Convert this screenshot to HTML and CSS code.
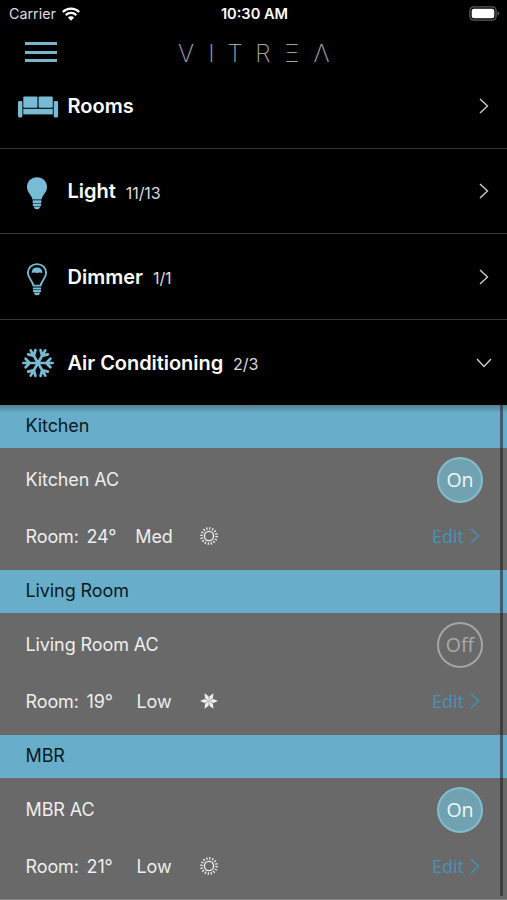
FILE: index.html
```
<!DOCTYPE html>
<html lang="en">
<head>
    <meta charset="UTF-8">
    <meta name="viewport" content="width=device-width, initial-scale=1.0">
    <title>Vitrea</title>
    <link rel="stylesheet" href="styles.css">
</head>
<body>

<!-- shared icons -->
<svg class="icon-defs" width="0" height="0">
    <symbol id="chevron" viewBox="0 0 12 18">
        <path d="M2 2 L9.5 9 L2 16" fill="none" stroke="currentColor" stroke-width="1.4"/>
    </symbol>
    <symbol id="sun" viewBox="0 0 20 20">
        <g fill="none" stroke="currentColor">
            <circle cx="10" cy="10" r="4.6" stroke-width="1.4"/>
            <circle cx="10" cy="10" r="7.6" stroke-width="2.6" stroke-dasharray="1.25 1.735"/>
        </g>
    </symbol>
    <symbol id="flake" viewBox="0 0 20 20">
        <g fill="currentColor">
            <path d="M10 10 L8 5.6 L10 1 L12 5.6 Z" transform="rotate(30 10 10)"/>
            <path d="M10 10 L8 5.6 L10 1 L12 5.6 Z" transform="rotate(90 10 10)"/>
            <path d="M10 10 L8 5.6 L10 1 L12 5.6 Z" transform="rotate(150 10 10)"/>
            <path d="M10 10 L8 5.6 L10 1 L12 5.6 Z" transform="rotate(210 10 10)"/>
            <path d="M10 10 L8 5.6 L10 1 L12 5.6 Z" transform="rotate(270 10 10)"/>
            <path d="M10 10 L8 5.6 L10 1 L12 5.6 Z" transform="rotate(330 10 10)"/>
        </g>
    </symbol>
    <symbol id="arm" viewBox="0 0 32 32" overflow="visible">
        <path d="M16 16 V1.4 M11.8 3.6 L16 7.8 L20.2 3.6" fill="none" stroke="currentColor" stroke-width="2.7" stroke-linecap="round"/>
    </symbol>
</svg>

<div class="status-bar">
    <div class="carrier">
        <span>Carrier</span>
        <svg width="18" height="14" viewBox="0 0 18 14">
            <g fill="none" stroke="#fff" stroke-width="2.3">
                <path d="M0.8 5 A11.7 11.7 0 0 1 17.2 5"/>
                <path d="M3.7 8.1 A7.6 7.6 0 0 1 14.3 8.1"/>
            </g>
            <path d="M9 13.7 L5.9 10.5 A4.4 4.4 0 0 1 12.1 10.5 Z" fill="#fff"/>
        </svg>
    </div>
    <div class="time">10:30 AM</div>
    <svg class="battery" width="31" height="15" viewBox="0 0 31 15">
        <rect x="0.9" y="0.9" width="26.2" height="13.2" rx="4" fill="none" stroke="#5c5c5c" stroke-width="1.3"/>
        <rect x="2.7" y="2.7" width="22.6" height="9.6" rx="2.2" fill="#fff"/>
        <path d="M28.6 5.2 Q30.4 6 30.4 7.5 Q30.4 9 28.6 9.8 Z" fill="#5c5c5c"/>
    </svg>
</div>

<div class="header">
    <div class="menu-btn"><span></span><span></span><span></span></div>
    <div class="logo"><span>V</span><span>I</span><span>T</span><span>R</span><span class="xi">Ξ</span><span>Λ</span></div>
</div>

<div class="menu">
    <div class="menu-row">
        <div class="menu-icon couch">
            <svg width="42" height="24" viewBox="0 0 42 24">
                <g fill="#78bbd5">
                    <rect x="6.3" y="1.5" width="14.2" height="11.3" rx="1"/>
                    <rect x="21.6" y="1.5" width="14.2" height="11.3" rx="1"/>
                    <rect x="6.3" y="13.8" width="29.5" height="5.6"/>
                    <rect x="1" y="6" width="4.4" height="16.5" rx="1.4"/>
                    <rect x="36.7" y="6" width="4.4" height="16.5" rx="1.4"/>
                </g>
            </svg>
        </div>
        <div class="menu-title">Rooms</div>
        <svg class="arrow" width="12" height="18"><use href="#chevron"/></svg>
    </div>

    <div class="menu-row">
        <div class="menu-icon bulb">
            <svg width="22" height="34" viewBox="0 0 22 34">
                <g fill="#78bbd5">
                    <path d="M11 1.3 C5 1.3 1 5.7 1 11 C1 16.6 5.6 18.6 6.4 23.6 H15.6 C16.4 18.6 21 16.6 21 11 C21 5.7 17 1.3 11 1.3 Z"/>
                    <rect x="6.6" y="24.3" width="8.8" height="2.6" rx="0.6"/>
                    <rect x="6.8" y="27.4" width="8.4" height="2.5" rx="0.6"/>
                    <path d="M7.4 30.4 H14.6 Q13.6 33.2 11 33.2 Q8.4 33.2 7.4 30.4 Z"/>
                </g>
            </svg>
        </div>
        <div class="menu-title">Light</div>
        <div class="menu-count">11/13</div>
        <svg class="arrow" width="12" height="18"><use href="#chevron"/></svg>
    </div>

    <div class="menu-row">
        <div class="menu-icon bulb">
            <svg width="22" height="34" viewBox="0 0 22 34">
                <path d="M11 2.1 C5.6 2.1 1.9 6 1.9 11 C1.9 16 6.6 18.6 7.4 23.6 H14.6 C15.4 18.6 20.1 16 20.1 11 C20.1 6 16.4 2.1 11 2.1 Z" fill="none" stroke="#78bbd5" stroke-width="1.9"/>
                <g fill="#78bbd5">
                    <path d="M5.6 11 Q5.6 5.4 11 5.4 Q16.4 5.4 16.4 11 Q13.7 10.2 11 11 Q8.3 10.2 5.6 11 Z"/>
                    <rect x="6.8" y="25.5" width="8.4" height="1.9" rx="0.6"/>
                    <rect x="6.9" y="28" width="8.2" height="1.9" rx="0.6"/>
                    <path d="M7.6 30.4 H14.4 Q13.6 33.2 11 33.2 Q8.4 33.2 7.6 30.4 Z"/>
                </g>
            </svg>
        </div>
        <div class="menu-title">Dimmer</div>
        <div class="menu-count">1/1</div>
        <svg class="arrow" width="12" height="18"><use href="#chevron"/></svg>
    </div>

    <div class="menu-row">
        <div class="menu-icon snow">
            <svg width="32" height="32" viewBox="0 0 32 32">
                <use href="#arm" width="32" height="32" transform="rotate(30 16 16)"/>
                <use href="#arm" width="32" height="32" transform="rotate(90 16 16)"/>
                <use href="#arm" width="32" height="32" transform="rotate(150 16 16)"/>
                <use href="#arm" width="32" height="32" transform="rotate(210 16 16)"/>
                <use href="#arm" width="32" height="32" transform="rotate(270 16 16)"/>
                <use href="#arm" width="32" height="32" transform="rotate(330 16 16)"/>
            </svg>
        </div>
        <div class="menu-title title-ac">Air Conditioning</div>
        <div class="menu-count">2/3</div>
        <svg class="arrow arrow-down" width="12" height="18"><use href="#chevron"/></svg>
    </div>
</div>

<div class="ac-list">
    <div class="room-name">Kitchen</div>
    <div class="room-body">
        <div class="ac-top">
            <div class="ac-name">Kitchen AC</div>
            <div class="power on">On</div>
        </div>
        <div class="ac-bottom">
            <div class="room-label">Room:</div>
            <div class="room-temp">24°</div>
            <div class="fan">Med</div>
            <svg class="mode" width="20" height="20"><use href="#sun"/></svg>
            <div class="edit">Edit <svg width="12" height="18"><use href="#chevron"/></svg></div>
        </div>
    </div>

    <div class="room-name">Living Room</div>
    <div class="room-body">
        <div class="ac-top">
            <div class="ac-name">Living Room AC</div>
            <div class="power">Off</div>
        </div>
        <div class="ac-bottom">
            <div class="room-label">Room:</div>
            <div class="room-temp">19°</div>
            <div class="fan">Low</div>
            <svg class="mode" width="20" height="20"><use href="#flake"/></svg>
            <div class="edit">Edit <svg width="12" height="18"><use href="#chevron"/></svg></div>
        </div>
    </div>

    <div class="room-name">MBR</div>
    <div class="room-body">
        <div class="ac-top">
            <div class="ac-name">MBR AC</div>
            <div class="power on">On</div>
        </div>
        <div class="ac-bottom">
            <div class="room-label">Room:</div>
            <div class="room-temp">21°</div>
            <div class="fan">Low</div>
            <svg class="mode" width="20" height="20"><use href="#sun"/></svg>
            <div class="edit">Edit <svg width="12" height="18"><use href="#chevron"/></svg></div>
        </div>
    </div>
    <div class="scrollbar"></div>
</div>

</body>
</html>
```
FILE: styles.css
```
* {
    box-sizing: border-box;
}

body {
    margin: 0;
    height: 900px;
    overflow: hidden;
    background-color: #000;
    color: #fff;
    font-family: Inter, "Liberation Sans", sans-serif;
}

svg {
    display: block;
    flex: none;
}

.icon-defs {
    position: absolute;
}

.status-bar {
    display: grid;
    grid-template-columns: 1fr 1fr 1fr;
    align-items: center;
    height: 27px;
    padding: 0 7px 0 9px;
    font-size: 14.3px;
}

.carrier {
    display: flex;
    align-items: center;
    gap: 6px;
    color: #ddd;
}

.time {
    text-align: center;
    font-size: 14.6px;
    font-weight: 600;
}

.battery {
    justify-self: end;
}

.header {
    display: flex;
    height: 36px;
    padding-left: 25px;
}

.menu-btn {
    display: flex;
    flex-direction: column;
    gap: 5.5px;
    width: 32px;
    padding-top: 15px;
}

.menu-btn span {
    height: 3px;
    background-color: #78b4c9;
}

.logo {
    display: grid;
    grid-template-columns: 24px 27px 20px 36px 22px 37px;
    margin-left: 117px;
    padding-top: 11px;
    text-align: center;
    font-size: 24.5px;
    font-weight: 200;
    line-height: 30px;
    color: #a4a4a4;
}

.xi {
    transform: scaleX(0.9);
}

.menu-row {
    display: flex;
    align-items: center;
    height: 85.5px;
    padding-top: 1px;
    padding-right: 17px;
    border-bottom: 1px solid #383838;
}

.menu-row:last-child {
    border-bottom: none;
}

.menu-icon {
    display: flex;
    justify-content: center;
    width: 67.5px;
    padding-right: 8px;
    padding-left: 17px;
    color: #78bbd5;
}

.couch {
    padding-top: 2px;
}

.bulb {
    padding-top: 4px;
    padding-right: 10px;
}

.snow {
    padding-top: 1px;
}

.menu-title {
    font-size: 20px;
    font-weight: 600;
}

.title-ac {
    letter-spacing: -0.05px;
}

.menu-count {
    margin-left: 10px;
    padding-top: 3px;
    font-size: 16px;
    letter-spacing: -0.1px;
    color: #ddd;
}

.arrow {
    margin-left: auto;
    color: #ccc;
}

.arrow-down {
    transform: rotate(90deg);
}

.ac-list {
    position: relative;
    height: 495px;
    background-color: #696969;
    border-bottom: 1px solid #888;
    font-size: 18px;
    letter-spacing: -0.1px;
}

.room-name {
    height: 43px;
    padding-left: 25.5px;
    line-height: 42px;
    background-color: #68aecb;
    color: #0b1a20;
}

.room-name:first-child {
    background-image: linear-gradient(#547f91, #68aecb 8px);
}

.room-body {
    height: 122px;
    padding: 9px 26px 0 25.5px;
    color: #eee;
}

.ac-top {
    display: flex;
    justify-content: space-between;
    height: 46px;
    margin-right: -2px;
}

.ac-name {
    line-height: 46px;
}

.power {
    width: 46px;
    height: 46px;
    border: 2px solid #a5a5a5;
    border-radius: 50%;
    text-align: center;
    line-height: 41px;
    font-family: "Open Sans", sans-serif;
    font-size: 19.5px;
    letter-spacing: 0;
    color: #aaa;
}

.power.on {
    border-color: #84bccd;
    background-color: #70a2b2;
    color: #f0f6f8;
}

.ac-bottom {
    display: flex;
    align-items: center;
    height: 24px;
    margin-top: 21px;
}

.room-label {
    width: 61px;
}

.room-temp {
    width: 40.5px;
}

.fan {
    width: 54px;
    text-align: center;
}

.mode {
    margin-left: 18px;
}

.edit {
    display: flex;
    align-items: center;
    gap: 5px;
    margin-left: auto;
    font-family: "Open Sans", sans-serif;
    letter-spacing: 0;
    color: #4394b9;
}

/* scroll indicator sits over the list */
.scrollbar {
    position: absolute;
    top: 0;
    right: 4px;
    width: 3px;
    height: 491px;
    background-color: rgba(30, 30, 30, 0.55);
}
```
